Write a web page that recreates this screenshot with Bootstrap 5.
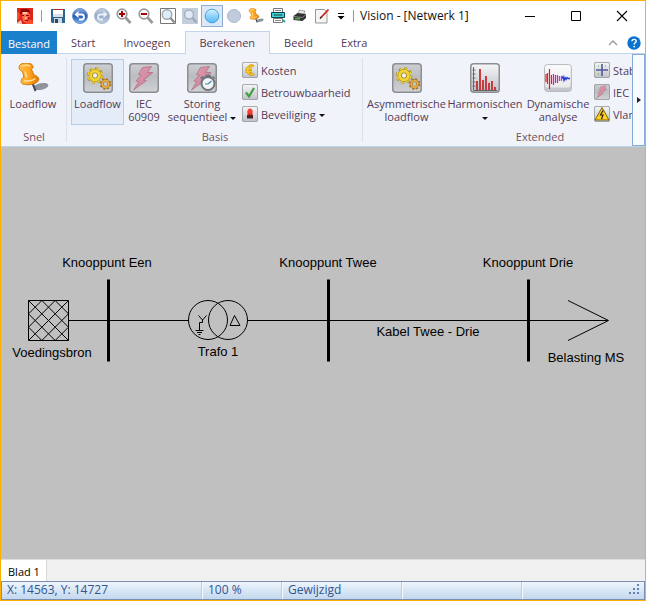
<!DOCTYPE html>
<html lang="nl">
<head>
<meta charset="utf-8">
<meta name="viewport" content="width=device-width, initial-scale=1">
<title>Vision - [Netwerk 1]</title>
<link href="https://cdn.jsdelivr.net/npm/bootstrap@5.3.0/dist/css/bootstrap.min.css" rel="stylesheet">
<style>
  :root { --ink: #543a56; --ribbon: #f0f4fa; --edge: #c3d5ea; }
  body { font: 11px/13px "Open Sans", "Noto Sans", sans-serif; color: var(--ink); }
  button { font: inherit; color: inherit; background: none; border: 0; padding: 0; }
  svg { display: block; flex: none; }
  .app-window { border: 1px solid #fdb000; background: #fff; }
  .title-bar { height: 30px; }
  .app-logo { width: 36px; padding-left: 16px; }
  .rule { width: 1px; height: 12px; background: #999; }
  .quick-tools { padding-left: 5px; }
  .quick-btn { width: 22px; height: 22px; display: grid; place-items: center; }
  .quick-btn.on { background: #dce8f6; outline: 1px solid #8fadd0; outline-offset: -1px; }
  .quick-more { width: 16px; }
  .caption-text { color: #111; font-size: 12px; line-height: 16px; padding-left: 6px; }
  .win-btn { width: 46px; height: 30px; display: grid; place-items: center; }
  .menu-tabs { height: 23px; box-shadow: inset 0 -1px var(--edge); }
  .menu-tab { padding: 0 13px 2px; height: 23px; border: 1px solid transparent; border-bottom: 0; }
  .menu-tab.file { background: #1a80cc; color: #fff; padding: 0; width: 56px; }
  .menu-tab.on { background: var(--ribbon); border-color: var(--edge); padding: 0 14px 2px; }
  .ribbon { height: 93px; background: var(--ribbon); border-bottom: 1px solid #bdd3ea; }
  .tool-group { position: relative; padding: 5px 4px 1px; }
  .tool-group::after { content: ""; width: 1px; background: #dbe1ea; position: absolute; right: 0; top: 4px; bottom: 4px; }
  .group-name { color: #74505f; line-height: 16px; }
  .big-tool { height: 66px; padding-top: 3px; border: 1px solid transparent; white-space: nowrap; display: flex; flex-direction: column; align-items: center; }
  .big-tool span { margin-top: 4px; }
  .big-tool.on { background: #e3ecf7; border-color: #b9cce6; }
  .w-a { width: 56px; } .w-b { width: 53px; } .w-c { width: 40px; } .w-d { width: 76px; } .w-e { width: 79px; } .w-f { width: 68px; } .w-g { width: 78px; }
  .g-snel { width: 66px; } .g-basis { width: 296px; } .g-ext { width: 354px; }
  .tool-list { padding-left: 2px; }
  .tool-list button { height: 22px; gap: 3px; white-space: nowrap; }
  .caret { display: inline-block; border: 3px solid transparent; border-top-color: #111; border-bottom: 0; vertical-align: middle; }
  .more-btn { width: 13px; background: #f7faff; border: 1px solid #86abd9; display: grid; place-items: center; }
  .drawing { background: #c0c0c0; min-height: 0; }
  .drawing text { font: 13px "Liberation Sans", Arial, sans-serif; fill: #000; text-anchor: middle; }
  .sheet-bar { height: 22px; background: #f0f0f0; border-top: 1px solid #dcdcdc; }
  .sheet-tab { background: #fff; color: #000; padding: 2px 7px 0; width: 46px; border-right: 1px solid #d9d9d9; white-space: nowrap; }
  .status-bar { height: 19px; border: 1px solid #7b90b0; background: linear-gradient(#edf5fd, #c3d8ee); color: #33548f; font-size: 12px; line-height: 16px; }
  .status-cell { padding-left: 5px; border-right: 1px solid #f5faff; box-shadow: inset -1px 0 #b8cde6; }
  .s1 { width: 201px; } .s2 { width: 80px; } .s3 { width: 120px; }
</style>
<script src="https://cdn.jsdelivr.net/npm/bootstrap@5.3.0/dist/js/bootstrap.bundle.min.js"></script>
</head>
<body>
<svg width="0" height="0" class="position-absolute" aria-hidden="true">
  <defs>
    <linearGradient id="gTile" x1="0" y1="0" x2="0" y2="1"><stop offset="0" stop-color="#cdcfd2"/><stop offset=".45" stop-color="#babcbf"/><stop offset="1" stop-color="#d0d2d5"/></linearGradient>
    <linearGradient id="gLight" x1="0" y1="0" x2="0" y2="1"><stop offset="0" stop-color="#f6f6f8"/><stop offset="1" stop-color="#bfc2c7"/></linearGradient>
    <linearGradient id="gBlue" x1="0" y1="0" x2="0" y2="1"><stop offset="0" stop-color="#8fb4e8"/><stop offset=".5" stop-color="#2358b0"/><stop offset="1" stop-color="#7db5ee"/></linearGradient>
    <linearGradient id="gPale" x1="0" y1="0" x2="0" y2="1"><stop offset="0" stop-color="#c4d0e2"/><stop offset=".5" stop-color="#93a9c8"/><stop offset="1" stop-color="#c3d3e6"/></linearGradient>
    <linearGradient id="gSky" x1="0" y1="0" x2="0" y2="1"><stop offset="0" stop-color="#d8f2ff"/><stop offset=".5" stop-color="#8fd3fb"/><stop offset="1" stop-color="#55baf5"/></linearGradient>
    <linearGradient id="gBolt" x1="0" y1="0" x2="1" y2="1"><stop offset="0" stop-color="#e0a0b2"/><stop offset="1" stop-color="#cc7c96"/></linearGradient>
    <linearGradient id="gPin" x1="0" y1="0" x2="1" y2="0"><stop offset="0" stop-color="#ffc04a"/><stop offset=".5" stop-color="#ffa51f"/><stop offset="1" stop-color="#d97600"/></linearGradient>
    <symbol id="tile" viewBox="0 0 30 30"><rect x=".75" y=".75" width="28.500" height="28.500" rx="3" fill="url(#gTile)" stroke="#8c8e91" stroke-width="1.500"/></symbol>
    <symbol id="lightTile" viewBox="0 0 30 30"><rect x=".75" y=".75" width="28.500" height="28.500" rx="3" fill="url(#gLight)" stroke="#8c8e91" stroke-width="1.500"/></symbol>
    <symbol id="gears" viewBox="0 0 30 30">
      <use href="#tile"/>
      <circle cx="12" cy="12.500" r="6.800" fill="none" stroke="#a8891c" stroke-width="3" stroke-dasharray="2.900 2.440"/>
      <circle cx="12" cy="12.500" r="6.400" fill="none" stroke="#f0d435" stroke-width="2.600" stroke-dasharray="2.500 2.530" stroke-dashoffset="-.2"/>
      <circle cx="12" cy="12.500" r="4.300" fill="none" stroke="#a8891c" stroke-width="4.200"/>
      <circle cx="12" cy="12.500" r="4.400" fill="none" stroke="#f0d435" stroke-width="3"/>
      <circle cx="12" cy="12.500" r="2" fill="#eef2f6"/>
      <circle cx="22.500" cy="21" r="4.600" fill="none" stroke="#a5731a" stroke-width="2.400" stroke-dasharray="2 1.613"/>
      <circle cx="22.500" cy="21" r="3.300" fill="none" stroke="#a5731a" stroke-width="2.800"/>
      <circle cx="22.500" cy="21" r="3.300" fill="none" stroke="#e6ad4a" stroke-width="1.700"/>
    </symbol>
    <symbol id="boltShape" viewBox="0 0 30 30"><path d="M13.500 4.500 22.500 3.500 18.500 9.500 24 9.500 14.500 17 17.500 17.500 4.500 27 10 18.500 7 18 12.500 12 9.500 11.500Z" fill="url(#gBolt)" stroke="#b07088" stroke-width=".8"/></symbol>
    <symbol id="pin" viewBox="0 0 32 30">
      <ellipse cx="24" cy="23.500" rx="7.500" ry="3.300" fill="#8f949c" transform="rotate(-12 24 23.500)"/>
      <path d="M15.500 20 18.500 28" stroke="#454c60" stroke-width="2.200"/>
      <path d="M2.500 2.500C4-.5 12-.8 15 1.500 17 3.500 15.800 5.500 14.500 6.500L17 12C21 13 22.500 15.500 21.500 17.500 20 21 10 23 5.500 20.800 3 19.500 4 15.500 7 14L5.500 8.500C2.500 7.500 1.500 5 2.500 2.500Z" fill="url(#gPin)" stroke="#d07a08"/>
      <path d="M5 3.500C7 1.800 11 2 13 3M8 8.500 9.800 14.500M7 17.500C10 19 16 17.500 18.500 15.500" fill="none" stroke="#ffdf98" stroke-width="1.600"/>
    </symbol>
    <symbol id="lens" viewBox="0 0 16 16"><circle cx="6" cy="6" r="4.800" fill="#f4f8fc" stroke="#999" stroke-width="1.700"/><path d="M9.500 9.500 14.500 15" stroke="#999" stroke-width="2.800"/></symbol>
  </defs>
</svg>

<div class="app-window vh-100 d-flex flex-column overflow-hidden">
  <header class="title-bar d-flex align-items-center flex-shrink-0">
    <div class="app-logo me-1">
      <svg width="16" height="16" viewBox="0 0 16 16"><path fill="#e0261a" d="M0 0h16v16H0z"/><path fill="#8d0a08" d="M4 1h7l2 2v3l-1-2H6L4 7 3 5z"/><path fill="#ff6a4c" d="M5 4h6l2 3-1 5-3 3-3-2-1-5z"/><path fill="#ffc9b8" d="M6 4h4v2H6zM8 9h1l1 2H8zM0 15l4-3 1 4H0z"/><path fill="#8a0a0a" d="M5 7h2v1H5zM9 7h3v1H9zM8 12h3v1H8z"/><path fill="#b81410" d="M11 9l2 0-1 4-2 2z"/><path fill="#ff4a2c" d="M12 11l4 2v3H9zM0 3l3 3-1 5-2 1z"/></svg>
    </div>
    <div class="rule"></div>
    <div class="quick-tools d-flex align-items-center">
      <button class="quick-btn" type="button" aria-label="Opslaan"><svg width="16" height="16"><path fill="#2f6390" d="M1 1h14v14H2l-1-1z"/><path fill="#fff" d="M3 1h10v8H3z"/><path fill="#d9e2ea" d="M3 6h10v3H3z"/><path fill="#b02a2a" d="M3 1h10v1H3z"/><path fill="#cfd8e0" d="M4 10h8v5H4z"/><path fill="#244a6e" d="M5 11h3v4H5z"/></svg></button>
      <button class="quick-btn" type="button" aria-label="Ongedaan maken"><svg width="16" height="16"><circle cx="8" cy="8" r="7.500" fill="url(#gBlue)" stroke="#6a90c8"/><path d="M5 6.500h4.500a2.500 2.500 0 0 1 0 5H7" fill="none" stroke="#fff" stroke-width="1.800"/><path d="M2.500 6.500 6.500 3v7z" fill="#fff"/></svg></button>
      <button class="quick-btn" type="button" aria-label="Opnieuw"><svg width="16" height="16"><circle cx="8" cy="8" r="7.500" fill="url(#gPale)" stroke="#a9b9d0"/><path d="M11 6.500H6.500a2.500 2.500 0 0 0 0 5H9" fill="none" stroke="#e9eff6" stroke-width="1.800"/><path d="M13.500 6.500 9.500 3v7z" fill="#e9eff6"/></svg></button>
      <button class="quick-btn" type="button" aria-label="Inzoomen"><svg width="16" height="16"><use href="#lens"/><path d="M3 6h6M6 3v6" stroke="#a80000" stroke-width="2"/></svg></button>
      <button class="quick-btn" type="button" aria-label="Uitzoomen"><svg width="16" height="16"><use href="#lens"/><path d="M3 6h6" stroke="#a80000" stroke-width="2"/></svg></button>
      <button class="quick-btn" type="button" aria-label="Alles tonen"><svg width="16" height="16"><path d="M.5.5h15v15H.5z" fill="#fff" stroke="#777"/><circle cx="7" cy="6.500" r="4.800" fill="#dcecf8" stroke="#a0a8b0" stroke-width="1.400"/><path d="m10.500 10 4 4.500" stroke="#888" stroke-width="2.200"/></svg></button>
      <button class="quick-btn" type="button" aria-label="Zoomvenster"><svg width="16" height="16"><path d="M0 0h16v16H0z" fill="#c3cedd"/><circle cx="7" cy="6.500" r="4.500" fill="#dfe9f4" stroke="#a3afc0" stroke-width="1.400"/><path d="m10.500 10 4 4.500" stroke="#9aa8bb" stroke-width="2.200"/></svg></button>
      <button class="quick-btn on" type="button" aria-label="Selectie"><svg width="16" height="16"><circle cx="8" cy="8" r="6.800" fill="url(#gSky)" stroke="#4b9ede"/></svg></button>
      <button class="quick-btn" type="button" aria-label="Object"><svg width="16" height="16"><circle cx="8" cy="8" r="6.500" fill="#c0cbdd" stroke="#a9b7cd"/></svg></button>
      <button class="quick-btn" type="button" aria-label="Snelle loadflow"><svg width="16" height="16"><use href="#pin"/></svg></button>
      <button class="quick-btn" type="button" aria-label="Rapport"><svg width="16" height="16"><path d="M3.500.5h9v4h-9zM3.500 10.500h9v4h-9z" fill="#fff" stroke="#777"/><path d="M1.500 4.500h13v5h-13z" fill="#35d6dc" stroke="#0a4448"/><path d="M4 6.500h8v1H4z" fill="#c9f4f4" stroke="#0a4448" stroke-width=".6"/><path d="M5 2.500h6M5 12.500h6" stroke="#888"/><path d="m13 12 2 2" stroke="#2a9" stroke-width="2"/></svg></button>
      <button class="quick-btn" type="button" aria-label="Afdrukken"><svg width="16" height="16"><path d="m6 6 1.500-4L13 3l-1.500 4z" fill="#e7e7e7" stroke="#888" stroke-width=".7"/><path d="m1.500 8 4-3 8.500 1v4l-3.500 3-9-1z" fill="#333"/><path d="m1.500 8.500 9 1 3.500-3" stroke="#888" fill="none"/><path d="M3 10.700h5" stroke="#4ab34a" stroke-width="1.500"/></svg></button>
      <button class="quick-btn" type="button" aria-label="Bewerken"><svg width="16" height="16"><path d="M1.500 1.500h9l2.500 3v10.500H1.500z" fill="#f4f4f4" stroke="#999"/><path d="m7 9.500 7.500-8" stroke="#d02222" stroke-width="1.800"/><path d="m6 10.500 1.500-1.500" stroke="#222" stroke-width="1.500"/></svg></button>
      <button class="quick-btn quick-more" type="button" aria-label="Werkbalk aanpassen"><svg width="8" height="8"><path d="M1 1.500h6" stroke="#000"/><path d="M.5 4h7L4 7.500z"/></svg></button>
    </div>
    <div class="rule ms-1"></div>
    <div class="caption-text flex-grow-1 text-nowrap">Vision - [Netwerk 1]</div>
    <button class="win-btn" type="button" aria-label="Minimaliseren"><svg width="12" height="12"><path d="M1 6.500h10" stroke="#000"/></svg></button>
    <button class="win-btn" type="button" aria-label="Maximaliseren"><svg width="12" height="12"><path d="M1.500 1.500h9v9h-9z" fill="none" stroke="#000"/></svg></button>
    <button class="win-btn" type="button" aria-label="Sluiten"><svg width="12" height="12"><path d="m1 1 10 10M11 1 1 11" stroke="#000" stroke-width="1.100"/></svg></button>
  </header>

  <nav class="menu-tabs d-flex flex-shrink-0" aria-label="Lint">
    <button class="menu-tab file" type="button">Bestand</button>
    <button class="menu-tab" type="button">Start</button>
    <button class="menu-tab" type="button">Invoegen</button>
    <button class="menu-tab on" type="button">Berekenen</button>
    <button class="menu-tab" type="button">Beeld</button>
    <button class="menu-tab" type="button">Extra</button>
    <div class="ms-auto d-flex align-items-center gap-2 pe-1">
      <button type="button" aria-label="Lint inklappen"><svg width="12" height="8"><path d="m2 6 4-4 4 4" fill="none" stroke="#999" stroke-width="1.300"/></svg></button>
      <button type="button" aria-label="Help"><svg width="14" height="14"><circle cx="7" cy="7" r="6.700" fill="#0b72d0"/><path d="M5 5.300C5 2.700 9.200 2.800 9.200 5.200 9.200 6.800 7.200 6.800 7.200 8.500" fill="none" stroke="#fff" stroke-width="1.400"/><circle cx="7.200" cy="10.600" r=".9" fill="#fff"/></svg></button>
    </div>
  </nav>

  <section class="ribbon d-flex flex-shrink-0">
    <div class="d-flex flex-grow-1 overflow-hidden">
      <div class="tool-group g-snel d-flex flex-column flex-shrink-0">
        <div class="d-flex flex-grow-1"><button class="big-tool w-a" type="button"><svg width="32" height="30"><use href="#pin"/></svg><span>Loadflow</span></button></div>
        <div class="group-name text-center">Snel</div>
      </div>
      <div class="tool-group g-basis d-flex flex-column flex-shrink-0">
        <div class="d-flex flex-grow-1">
          <button class="big-tool on w-b" type="button"><svg width="30" height="30"><use href="#gears"/></svg><span>Loadflow</span></button>
          <button class="big-tool w-c" type="button"><svg width="30" height="30"><use href="#tile"/><use href="#boltShape"/></svg><span>IEC<br>60909</span></button>
          <button class="big-tool w-d" type="button"><svg width="30" height="30"><use href="#tile"/><use href="#boltShape"/><path d="M19 12.500h4v3h-4zM13.500 15.500l3-2M28 15.500l-2.500-2" fill="#6d777d" stroke="#6d777d" stroke-width="1.600"/><circle cx="21" cy="20.500" r="6.500" fill="#f2f5f6" stroke="#69757b" stroke-width="2"/><path d="m21 21 3.500-3M21 21h-3" stroke="#4487a8" stroke-width="1.200"/></svg><span>Storing<br>sequentieel <i class="caret"></i></span></button>
          <div class="tool-list d-flex flex-column">
            <button class="d-flex align-items-center" type="button"><svg width="16" height="16"><use href="#lightTile"/><path d="M12 4.500C8.500 2 5.500 5 5.500 8s3 6 6.500 3.500M3.500 7H10M3.500 9.500H10" fill="none" stroke="#c79000" stroke-width="2.300"/><path d="M12 4.500C8.500 2 5.500 5 5.500 8s3 6 6.500 3.500M3.500 7H10M3.500 9.500H10" fill="none" stroke="#f8cd28" stroke-width="1.300"/></svg>Kosten</button>
            <button class="d-flex align-items-center" type="button"><svg width="16" height="16"><use href="#lightTile"/><path d="m4 8.500 3 4L12 4" fill="none" stroke="#3fa040" stroke-width="2.200"/></svg>Betrouwbaarheid</button>
            <button class="d-flex align-items-center" type="button"><svg width="16" height="16"><use href="#lightTile"/><path d="M5.500 5h5v4h-5z" fill="#e5261f"/><circle cx="8" cy="5" r="2.500" fill="#f4443a"/><path d="M5 9h6v3.500H5z" fill="#4a2424"/></svg><span>Beveiliging <i class="caret"></i></span></button>
          </div>
        </div>
        <div class="group-name text-center">Basis</div>
      </div>
      <div class="tool-group g-ext d-flex flex-column flex-shrink-0">
        <div class="d-flex flex-grow-1">
          <button class="big-tool w-e" type="button"><svg width="30" height="30"><use href="#gears"/></svg><span>Asymmetrische<br>loadflow</span></button>
          <button class="big-tool w-g" type="button"><svg width="30" height="30"><use href="#lightTile"/><path d="M3.500 4v23.500H27" fill="none" stroke="#666"/><path d="M2.500 7h3M2.500 11h3M2.500 15h3M2.500 19h3M2.500 23h3" stroke="#555" stroke-width=".8"/><path d="M7 27V18M10 27V6M13 27V17M16 27V13M19 27V20M22 27V18M25 27V24" stroke="#c53c41" stroke-width="2"/></svg><span>Harmonischen<br><i class="caret"></i></span></button>
          <button class="big-tool w-f" type="button"><svg width="30" height="30"><rect x="1.500" y="1.500" width="27" height="27" rx="3" fill="url(#gLight)" stroke="#bbbdc4"/><rect x="2.500" y="2.500" width="25" height="22" rx="2" fill="#fff" fill-opacity=".6"/><path d="M3 19V11M4.500 10v11" stroke="#f02020" stroke-width="1.200"/><path d="M6.500 6v20M8.500 12v9" stroke="#ee1048" stroke-width="1.200"/><path d="M10.500 11v11M12.500 12v8M14.500 12v8" stroke="#e818a0" stroke-width="1.200"/><path d="M16.500 13v5M18.500 13v5" stroke="#c238dc" stroke-width="1.200"/><path d="m19 15.500 1-2 1 4 1-3 1 2 1-2 1 1h2" fill="none" stroke="#2438d8" stroke-width="1.300"/></svg><span>Dynamische<br>analyse</span></button>
          <div class="tool-list d-flex flex-column">
            <button class="d-flex align-items-center" type="button"><svg width="16" height="16"><use href="#lightTile"/><path d="M8 2v12M2 8h12" stroke="#53589c" stroke-width="1.600"/><path d="M4 4h1M11 4h1M4 12h1" stroke="#4a4"/></svg>Stab</button>
            <button class="d-flex align-items-center" type="button"><svg width="16" height="16"><use href="#tile"/><use href="#boltShape"/></svg>IEC</button>
            <button class="d-flex align-items-center" type="button"><svg width="16" height="16"><use href="#lightTile"/><path d="M8 1.500 15 14H1z" fill="#ffd21c" stroke="#806400"/><path d="M9 4.500 6.500 9H9l-1.500 4" fill="none" stroke="#222" stroke-width="1.200"/></svg>Vlam</button>
          </div>
        </div>
        <div class="group-name text-center">Extended</div>
      </div>
    </div>
    <button class="more-btn flex-shrink-0" type="button" aria-label="Meer"><svg width="4" height="6"><path d="M0 0v6l4-3z" fill="#222"/></svg></button>
  </section>

  <main class="drawing flex-grow-1">
    <svg width="100%" height="100%" role="img" aria-label="Netschema">
      <g stroke="#000" fill="none">
        <path d="M27.500 153.500h40v40h-40zM54.170 153.500l13.330 13.330M40.830 153.500 67.500 180.170M27.500 153.500l40 40M27.500 166.830 54.170 193.500M27.500 180.170 40.830 193.500M40.830 153.500 27.500 166.830M54.170 153.500 27.500 180.170M67.500 153.500l-40 40M67.500 166.830 40.830 193.500M67.500 180.170 54.170 193.500"/>
        <path d="M68 173.500h120M247 173.500h360M567 153.500l40.500 20-40.500 20"/>
        <circle cx="207" cy="173" r="19.500"/><circle cx="227" cy="173" r="19.500"/>
        <path d="m197.500 168.500 4 4.500 4-4.500M201.500 173v2.500h-3v8M194.500 183.500h8M196 185.500h5M197.500 187.500h2M233.500 168.500l-4.500 10h10z"/>
        <path d="M107.500 132.500v82M327.500 132.500v82M527.500 132.500v82" stroke-width="3"/>
      </g>
      <text x="106" y="120">Knooppunt Een</text>
      <text x="327" y="120">Knooppunt Twee</text>
      <text x="527" y="120">Knooppunt Drie</text>
      <text x="51" y="210">Voedingsbron</text>
      <text x="217" y="209">Trafo 1</text>
      <text x="427" y="189">Kabel Twee - Drie</text>
      <text x="585" y="215">Belasting MS</text>
    </svg>
  </main>

  <div class="sheet-bar d-flex flex-shrink-0"><button class="sheet-tab" type="button">Blad 1</button></div>
  <footer class="status-bar d-flex flex-shrink-0">
    <div class="status-cell s1">X: 14563, Y: 14727</div>
    <div class="status-cell s2">100 %</div>
    <div class="status-cell s3">Gewijzigd</div>
    <div class="status-cell s3"></div>
    <svg class="ms-auto align-self-end me-1 mb-1" width="12" height="12"><path d="M9 1h2v2H9zM5 5h2v2H5zM9 5h2v2H9zM1 9h2v2H1zM5 9h2v2H5zM9 9h2v2H9z" fill="#6482b0"/></svg>
  </footer>
</div>
</body>
</html>
